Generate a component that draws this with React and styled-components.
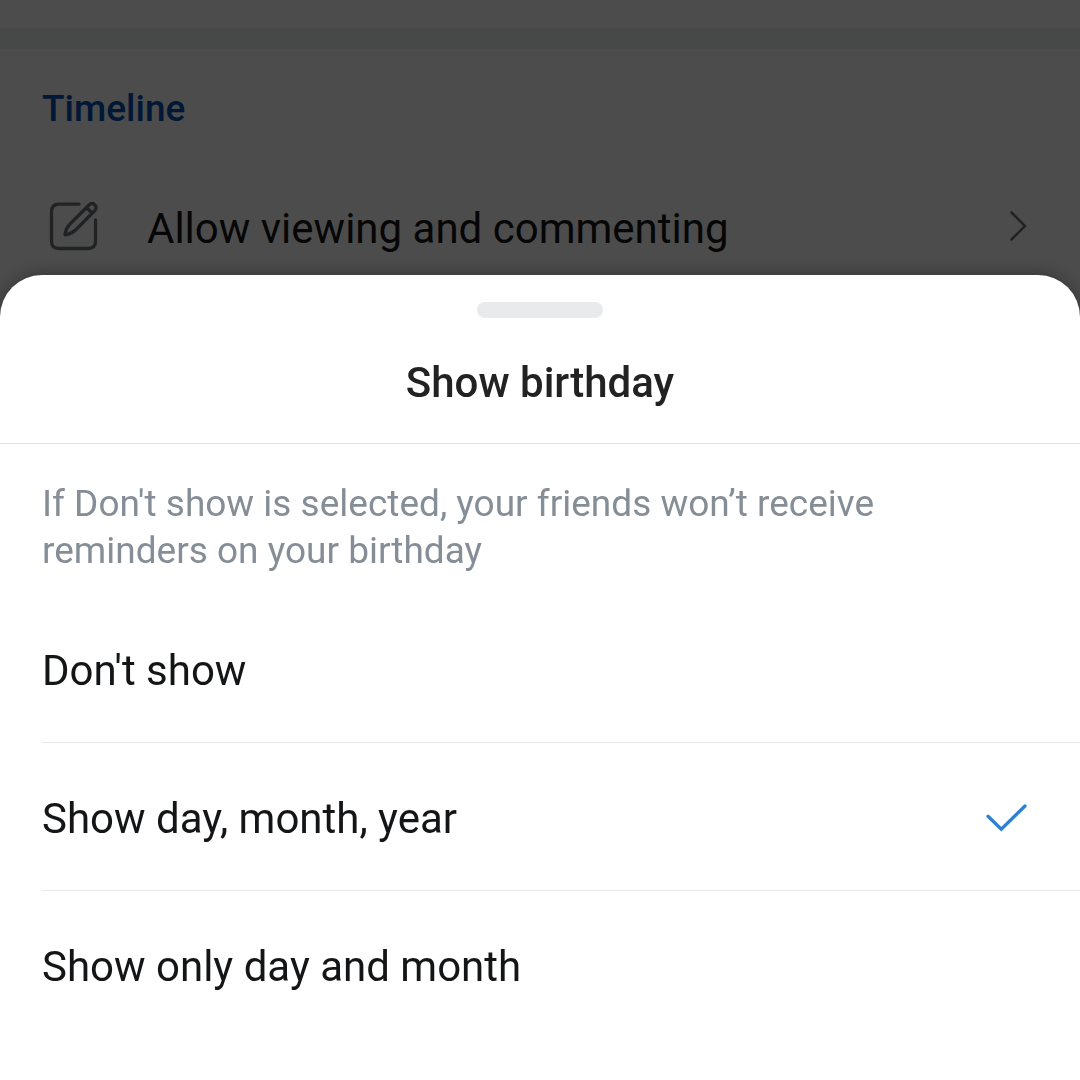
import React, { useState } from 'react';
import styled, { createGlobalStyle } from 'styled-components';

const GlobalStyle = createGlobalStyle`
  * {
    box-sizing: border-box;
  }

  body {
    margin: 0;
    background: #ffffff;
    color: #141516;
    font-family: Roboto, "Liberation Sans", sans-serif;
  }
`;

const Page = styled.main`
  min-height: 100vh;
  padding-top: 28px;
`;

const SectionGap = styled.div`
  height: 21px;
  background: #edf4f2;
`;

const SectionTitle = styled.h2`
  margin: 0;
  padding: 37px 42px 34px;
  color: #0050b4;
  font-size: 37px;
  font-weight: 500;
  line-height: 46px;
`;

const SettingButton = styled.button`
  display: flex;
  align-items: center;
  width: 100%;
  height: 120px;
  padding: 0 42px;
  border: 0;
  background: none;
  color: #141516;
  font: inherit;
  font-size: 42px;
  text-align: left;
`;

const SettingLabel = styled.span`
  flex: 1;
  margin-left: 41px;
  padding-top: 4px;
`;

const Scrim = styled.div`
  position: fixed;
  inset: 0;
  display: flex;
  flex-direction: column;
  justify-content: flex-end;
  background: rgba(0, 0, 0, 0.7);
`;

const Sheet = styled.section`
  padding: 27px 0 41px;
  border-radius: 42px 42px 0 0;
  background: #ffffff;
  box-shadow: 0 0 20px rgba(0, 0, 0, 0.35);
`;

const Handle = styled.div`
  width: 126px;
  height: 16px;
  margin: 0 auto;
  border-radius: 8px;
  background: #e9eaec;
`;

const SheetTitle = styled.h1`
  margin: 0;
  padding: 40px 42px 35px;
  border-bottom: 1px solid #dedfe0;
  color: #222222;
  font-size: 42px;
  font-weight: 500;
  line-height: 50px;
  text-align: center;
`;

const Description = styled.p`
  margin: 0;
  padding: 36px 180px 21px 42px;
  color: #858e96;
  font-size: 37px;
  line-height: 47px;
`;

const Options = styled.div`
  padding-left: 42px;
`;

const Option = styled.label`
  display: flex;
  align-items: center;
  justify-content: space-between;
  height: 148px;
  padding: 4px 42px 0 0;
  border-bottom: 1px solid #e8e9ea;
  font-size: 42px;
  cursor: pointer;

  &:last-child {
    border-bottom-color: transparent;
  }
`;

const Radio = styled.input`
  position: absolute;
  opacity: 0;
`;

function ComposeIcon() {
  return (
    <svg width="64" height="64" viewBox="0 0 64 64" fill="none" stroke="#717477" strokeWidth="3.300" strokeLinecap="round" strokeLinejoin="round">
      <path d="M37 10.200H17Q9.500 10.200 9.500 18V47Q9.500 54.500 17 54.500H46Q53.500 54.500 53.500 47V26" />
      <path d="M23 40.500Q24 34 28 30L47.500 10.500Q50 8.500 52.500 10.500Q55.500 13.500 53 16.500L33.500 36Q30 39.500 23.500 41Z" />
      <path d="M44.500 13.500L50 19" />
    </svg>
  );
}

function ChevronIcon() {
  return (
    <svg width="28" height="42" viewBox="0 0 28 42" fill="none" stroke="#717477" strokeWidth="2.500" strokeLinecap="round">
      <path d="M1.500 7.500L15 21L1.500 34.500" />
    </svg>
  );
}

function CheckIcon() {
  return (
    <svg width="64" height="64" viewBox="0 0 64 64" fill="none" stroke="#2d81d3" strokeWidth="3.300" strokeLinecap="round">
      <path d="M14 29.300L27.300 42.300L51 19" />
    </svg>
  );
}

const options = [
  { value: 'none', label: "Don't show" },
  { value: 'full', label: 'Show day, month, year' },
  { value: 'short', label: 'Show only day and month' },
];

function BirthdaySheet() {

  const [selected, setSelected] = useState('full');

  return (
    <Sheet role="dialog" aria-labelledby="sheet-title">
      <Handle />
      <SheetTitle id="sheet-title">Show birthday</SheetTitle>
      <Description>
        If Don't show is selected, your friends won’t receive reminders on your birthday
      </Description>

      <Options role="radiogroup" aria-labelledby="sheet-title">
        {options.map(({ value, label }) => (
          <Option key={value} htmlFor={value}>
            <Radio
              type="radio"
              name="birthday"
              id={value}
              checked={selected === value}
              onChange={() => setSelected(value)} />
            {label}
            {selected === value && <CheckIcon />}
          </Option>
        ))}
      </Options>
    </Sheet>
  );
}

function App() {

  return (
    <>
      <GlobalStyle />
      <Page>
        <SectionGap />
        <SectionTitle>Timeline</SectionTitle>
        <SettingButton type="button">
          <ComposeIcon />
          <SettingLabel>Allow viewing and commenting</SettingLabel>
          <ChevronIcon />
        </SettingButton>
      </Page>
      <Scrim>
        <BirthdaySheet />
      </Scrim>
    </>
  );
}

export default App;
